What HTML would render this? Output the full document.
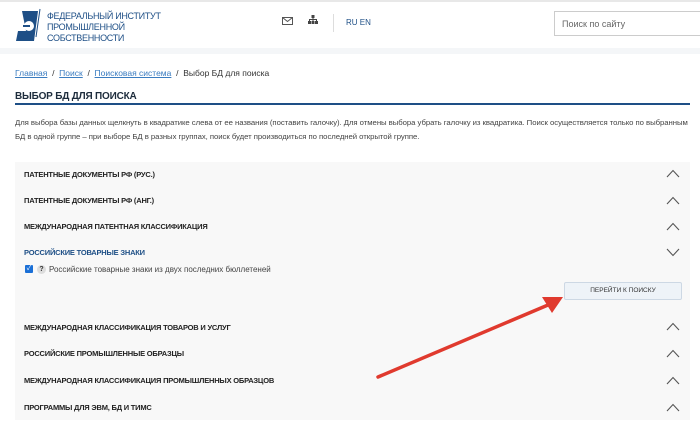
<!DOCTYPE html>
<html><head><meta charset="utf-8"><style>
*{margin:0;padding:0;box-sizing:border-box}
body{width:700px;height:431px;overflow:hidden;background:#fff;font-family:"Liberation Sans","Noto Sans CJK SC",sans-serif;color:#333;position:relative}
.top{height:2px;background:#e8e8e8}
.hdr{height:46px;position:relative}
.strip{height:6px;background:#f4f6f8}
.abs{position:absolute}
.logo-t{left:47px;top:9px;font-size:9px;letter-spacing:-0.3px;line-height:11px;color:#1e4f86}
.bc{left:15px;top:68px;font-size:8.5px;color:#333}
.bc a{color:#3a7cc0;text-decoration:underline}
.title{left:15px;top:91px;font-size:10px;letter-spacing:-0.2px;font-weight:bold;color:#1d2c3c}
.line{left:15px;top:103px;width:675px;height:2px;background:#1e4f86}
.p{left:15px;top:116px;font-size:7.75px;letter-spacing:-0.05px;line-height:14px;color:#444;width:678px}
.panel{left:15px;top:162px;width:675px;height:258px;background:#f8f8f8}
.row{position:absolute;left:24px;font-size:7.5px;letter-spacing:-0.2px;font-weight:bold;color:#222}
.chev{position:absolute;left:666px}
</style></head><body>
<div class="top"></div>
<div class="hdr">
<svg class="abs" style="left:14px;top:5px" width="30" height="36" viewBox="0 0 30 36"><path d="M8 4 L24 4 L20 34 L2 34 L4 24 L12 24 Z" fill="#1e4f86"/><circle cx="15" cy="19" r="5" fill="#fff"/><path d="M9 19 L16 19" stroke="#1e4f86" stroke-width="2"/><path d="M26 2 L22 30" stroke="#1e4f86" stroke-width="1"/></svg>
<div class="abs logo-t">ФЕДЕРАЛЬНЫЙ ИНСТИТУТ<br>ПРОМЫШЛЕННОЙ<br>СОБСТВЕННОСТИ</div>
<svg class="abs" style="left:282px;top:15px" width="11" height="8"><rect x=".5" y=".5" width="10" height="7" fill="none" stroke="#555"/><path d="M.5 .5 L5.5 4.5 L10.5 .5" fill="none" stroke="#555"/></svg>
<svg class="abs" style="left:308px;top:13px" width="10" height="10"><rect x="3.5" y="0" width="3" height="3" fill="#444"/><rect x="0" y="6" width="3" height="3" fill="#444"/><rect x="3.5" y="6" width="3" height="3" fill="#444"/><rect x="7" y="6" width="3" height="3" fill="#444"/><path d="M5 3v3M1.5 6V4.5h7V6" stroke="#444" fill="none"/></svg>
<div class="abs" style="left:333px;top:12px;width:1px;height:18px;background:#ddd"></div>
<div class="abs" style="left:346px;top:16px;font-size:8px;color:#1e4f86">RU EN</div>
<div class="abs" style="left:554px;top:9px;width:150px;height:25px;border:1px solid #ccc;font-size:9px;color:#666;padding:7px 7px">Поиск по сайту</div>
</div>
<div class="strip"></div>
<div class="abs bc"><a>Главная</a> &nbsp;/&nbsp; <a>Поиск</a> &nbsp;/&nbsp; <a>Поисковая система</a> &nbsp;/&nbsp; Выбор БД для поиска</div>
<div class="abs title">ВЫБОР БД ДЛЯ ПОИСКА</div>
<div class="abs line"></div>
<div class="abs p">Для выбора базы данных щелкнуть в квадратике слева от ее названия (поставить галочку). Для отмены выбора убрать галочку из квадратика. Поиск осуществляется только по выбранным<br>БД в одной группе – при выборе БД в разных группах, поиск будет производиться по последней открытой группе.</div>
<div class="abs panel"></div>
<div class="row" style="top:170px">ПАТЕНТНЫЕ ДОКУМЕНТЫ РФ (РУС.)</div><svg class="chev" style="top:169px" width="14" height="9"><path d="M1 8 L7 1.5 L13 8" fill="none" stroke="#555" stroke-width="1.1"/></svg>
<div class="row" style="top:196px">ПАТЕНТНЫЕ ДОКУМЕНТЫ РФ (АНГ.)</div><svg class="chev" style="top:196px" width="14" height="9"><path d="M1 8 L7 1.5 L13 8" fill="none" stroke="#555" stroke-width="1.1"/></svg>
<div class="row" style="top:222px">МЕЖДУНАРОДНАЯ ПАТЕНТНАЯ КЛАССИФИКАЦИЯ</div><svg class="chev" style="top:222px" width="14" height="9"><path d="M1 8 L7 1.5 L13 8" fill="none" stroke="#555" stroke-width="1.1"/></svg>
<div class="row" style="top:248px;color:#1e4f86">РОССИЙСКИЕ ТОВАРНЫЕ ЗНАКИ</div><svg class="chev" style="top:248px" width="14" height="9"><path d="M1 1 L7 7.5 L13 1" fill="none" stroke="#555" stroke-width="1.1"/></svg>
<div class="abs" style="left:25px;top:265px;width:8px;height:8px;background:#1a6fd6;border-radius:1px;color:#fff;font-size:7px;line-height:8px;text-align:center">✓</div>
<div class="abs" style="left:37px;top:265px;width:9px;height:9px;background:#ddd;border-radius:50%;font-size:7px;line-height:9px;text-align:center;font-weight:bold;color:#333">?</div>
<div class="abs" style="left:49px;top:265px;font-size:8px;color:#444">Российские товарные знаки из двух последних бюллетеней</div>
<div class="abs" style="left:564px;top:282px;width:118px;height:18px;background:#eef3f8;border:1px solid #cdd8e4;border-radius:2px;font-size:6.5px;text-align:center;line-height:16px;color:#333">ПЕРЕЙТИ К ПОИСКУ</div>
<div class="row" style="top:323px">МЕЖДУНАРОДНАЯ КЛАССИФИКАЦИЯ ТОВАРОВ И УСЛУГ</div><svg class="chev" style="top:322px" width="14" height="9"><path d="M1 8 L7 1.5 L13 8" fill="none" stroke="#555" stroke-width="1.1"/></svg>
<div class="row" style="top:349px">РОССИЙСКИЕ ПРОМЫШЛЕННЫЕ ОБРАЗЦЫ</div><svg class="chev" style="top:349px" width="14" height="9"><path d="M1 8 L7 1.5 L13 8" fill="none" stroke="#555" stroke-width="1.1"/></svg>
<div class="row" style="top:376px">МЕЖДУНАРОДНАЯ КЛАССИФИКАЦИЯ ПРОМЫШЛЕННЫХ ОБРАЗЦОВ</div><svg class="chev" style="top:376px" width="14" height="9"><path d="M1 8 L7 1.5 L13 8" fill="none" stroke="#555" stroke-width="1.1"/></svg>
<div class="row" style="top:403px">ПРОГРАММЫ ДЛЯ ЭВМ, БД И ТИМС</div><svg class="chev" style="top:403px" width="14" height="9"><path d="M1 8 L7 1.5 L13 8" fill="none" stroke="#555" stroke-width="1.1"/></svg>
<svg class="abs" style="left:0;top:0" width="700" height="431"><path d="M378 377 L548 305" stroke="#e03a2e" stroke-width="3.5" stroke-linecap="round"/><path d="M563 297 L542 297 L552 313 Z" fill="#e03a2e"/></svg>
</body></html>
